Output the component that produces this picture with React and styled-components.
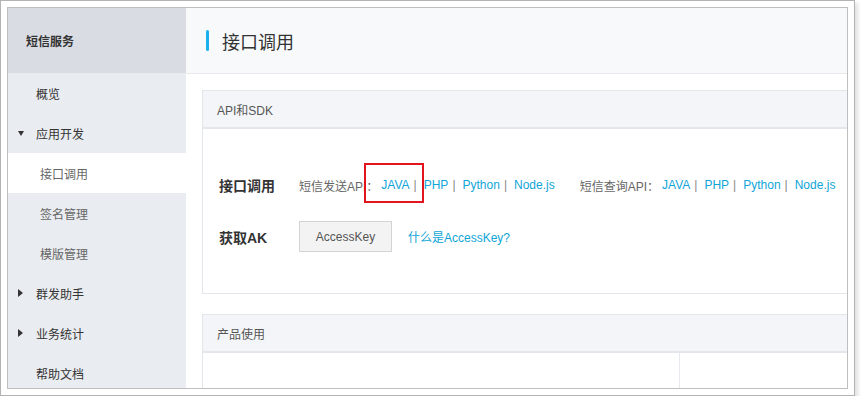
import React from "react";
import styled, { createGlobalStyle } from "styled-components";

const GlobalStyle = createGlobalStyle`
    html, body {
        margin: 0;
        padding: 0;
        background: #fff;
    }
    body {
        font-family: "Liberation Sans", "Noto Sans CJK SC", sans-serif;
        font-size: 12px;
        color: #333;
    }
`;

const Frame = styled.div`
    width: 855px;
    height: 396px;
    box-sizing: border-box;
    border: 1px solid #b3b3b3;
    padding: 6px;
    background: #fff;
    box-shadow: 3px 3px 4px rgba(0, 0, 0, 0.12);
`;

const Screen = styled.div`
    position: relative;
    display: flex;
    height: 382px;
    box-sizing: border-box;
    border: 1px solid #bfbfbf;
    overflow: hidden;
`;

const Sidebar = styled.nav`
    width: 178px;
    flex-shrink: 0;
    background: #e9ecf0;
`;

const SideTitle = styled.div`
    height: 65px;
    display: flex;
    align-items: center;
    padding-left: 18px;
    background: #d9dde3;
    font-weight: bold;
    font-size: 12px;
    color: #333;
`;

const MenuItem = styled.div`
    position: relative;
    height: 40px;
    display: flex;
    align-items: center;
    padding-left: ${props => (props.sub ? "32px" : "28px")};
    background: ${props => (props.active ? "#fff" : "transparent")};
    color: ${props => (props.sub ? "#666" : "#333")};
    font-size: 12px;
`;

const Caret = styled.span`
    position: absolute;
    left: 10px;
    top: 50%;
    width: 0;
    height: 0;
    ${props => (props.open
        ? `
        margin-top: -2px;
        border-left: 3.5px solid transparent;
        border-right: 3.5px solid transparent;
        border-top: 5px solid #333;
    `
        : `
        margin-top: -4px;
        border-top: 4px solid transparent;
        border-bottom: 4px solid transparent;
        border-left: 5px solid #333;
    `)}
`;

const Main = styled.main`
    flex: 1;
    min-width: 0;
    overflow: hidden;
    background: #fff;
`;

const PageHeader = styled.header`
    height: 65px;
    display: flex;
    align-items: center;
    padding-left: 20px;
    background: #f8f9fb;
    border-bottom: 1px solid #e6e8eb;
`;

const HeaderBar = styled.span`
    width: 3px;
    height: 21px;
    border-radius: 2px;
    background: #1cb1ec;
    margin-right: 13px;
`;

const PageTitle = styled.h1`
    margin: 0;
    font-size: 18px;
    font-weight: normal;
    color: #333;
`;

const Content = styled.div`
    padding: 16px 0 0 16px;
`;

const Panel = styled.section`
    margin-right: -20px;
    margin-bottom: 20px;
    border: 1px solid #e3e7ec;
`;

const PanelHeader = styled.div`
    height: 36px;
    display: flex;
    align-items: center;
    padding-left: 14px;
    background: #f4f5f8;
    border-bottom: 2px solid #e3e7ec;
    color: #555;
    font-size: 12px;
`;

const PanelBody = styled.div`
    box-sizing: border-box;
    height: ${props => props.height}px;
    padding: 36px 16px 0;
`;

const Row = styled.div`
    display: flex;
    align-items: center;
    height: ${props => props.height}px;
    margin-bottom: ${props => props.gap || 0}px;
`;

const Label = styled.div`
    width: 80px;
    flex-shrink: 0;
    font-weight: bold;
    font-size: 14px;
    color: #333;
`;

const Group = styled.div`
    display: flex;
    align-items: center;
    margin-right: 25px;
    color: #666;
    white-space: nowrap;
`;

const Caption = styled.span`
    margin-right: 3px;
`;

const Link = styled.a`
    color: #0fa5d8;
    text-decoration: none;
    cursor: pointer;
`;

const Sep = styled.span`
    margin: 0 7px 0 4px;
    color: #888;
`;

const Button = styled.button`
    width: 93px;
    height: 31px;
    border: 1px solid #d3d3d3;
    background: #f3f3f3;
    color: #555;
    font-family: inherit;
    font-size: 12px;
    padding: 0;
    margin-right: 16px;
`;

const Columns = styled.div`
    display: grid;
    grid-template-columns: 477px 1fr;
    height: 40px;
`;

const Column = styled.div`
    border-right: 1px solid #e6e9ee;
`;

const Marker = styled.div`
    position: absolute;
    left: 356px;
    top: 155px;
    width: 60px;
    height: 40px;
    box-sizing: border-box;
    border: 2px solid #e2141d;
    pointer-events: none;
`;

const langs = ["JAVA", "PHP", "Python", "Node.js"];

const LinkGroup = ({ caption }) => (
    <Group>
        <Caption>{caption}</Caption>
        {langs.map((lang, i) => (
            <React.Fragment key={lang}>
                <Link>{lang}</Link>
                {i < langs.length - 1 && <Sep>|</Sep>}
            </React.Fragment>
        ))}
    </Group>
);

const menu = [
    { text: "概览" },
    { text: "应用开发", caret: "open" },
    { text: "接口调用", sub: true, active: true },
    { text: "签名管理", sub: true },
    { text: "模版管理", sub: true },
    { text: "群发助手", caret: "closed" },
    { text: "业务统计", caret: "closed" },
    { text: "帮助文档" },
];

export default function App() {
    return (
        <>
            <GlobalStyle />
            <Frame>
                <Screen>
                    <Sidebar>
                        <SideTitle>短信服务</SideTitle>
                        {menu.map(item => (
                            <MenuItem key={item.text} sub={item.sub} active={item.active}>
                                {item.caret && <Caret open={item.caret === "open"} />}
                                {item.text}
                            </MenuItem>
                        ))}
                    </Sidebar>
                    <Main>
                        <PageHeader>
                            <HeaderBar />
                            <PageTitle>接口调用</PageTitle>
                        </PageHeader>
                        <Content>
                            <Panel>
                                <PanelHeader>API和SDK</PanelHeader>
                                <PanelBody height={164}>
                                    <Row height={40} gap={16}>
                                        <Label>接口调用</Label>
                                        <LinkGroup caption="短信发送API：" />
                                        <LinkGroup caption="短信查询API：" />
                                    </Row>
                                    <Row height={31}>
                                        <Label>获取AK</Label>
                                        <Button>AccessKey</Button>
                                        <Link>什么是AccessKey?</Link>
                                    </Row>
                                </PanelBody>
                            </Panel>
                            <Panel>
                                <PanelHeader>产品使用</PanelHeader>
                                <Columns>
                                    <Column />
                                    <div />
                                </Columns>
                            </Panel>
                        </Content>
                    </Main>
                    <Marker />
                </Screen>
            </Frame>
        </>
    );
}
